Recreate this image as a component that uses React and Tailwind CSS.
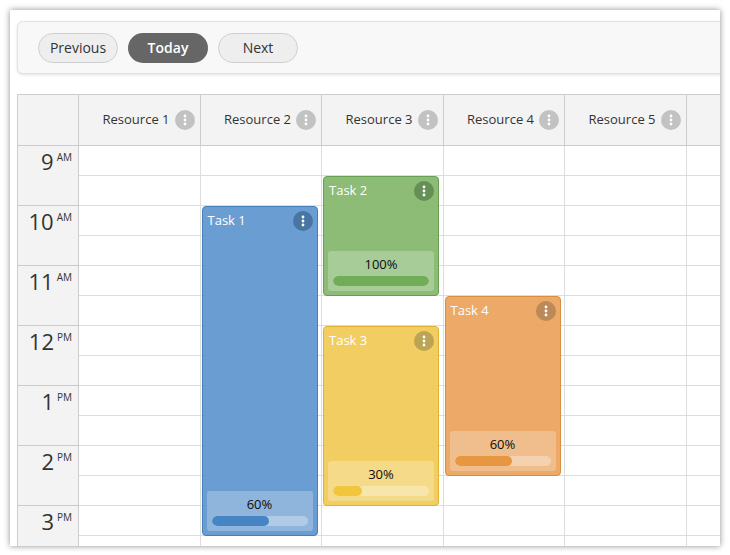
const cols = ["Resource 1","Resource 2","Resource 3","Resource 4","Resource 5"];
const hours = [["9","AM"],["10","AM"],["11","AM"],["12","PM"],["1","PM"],["2","PM"],["3","PM"]];
const events = [
  {col:1,top:60,h:330,name:"Task 1",pct:60,bg:"bg-[#6399d0]",bd:"border-[#3f7ab8]",bar:"bg-[#3d7fc1]",dot:"bg-[#3f6e9c]"},
  {col:2,top:30,h:120,name:"Task 2",pct:100,bg:"bg-[#86b96e]",bd:"border-[#5f9a4a]",bar:"bg-[#6aa84f]",dot:"bg-[#5e8a4c]"},
  {col:2,top:180,h:180,name:"Task 3",pct:30,bg:"bg-[#f2cc5a]",bd:"border-[#e0ad2a]",bar:"bg-[#f1c232]",dot:"bg-[#b8a04a]"},
  {col:3,top:150,h:180,name:"Task 4",pct:60,bg:"bg-[#eba55f]",bd:"border-[#d6873c]",bar:"bg-[#e69138]",dot:"bg-[#b88450]"},
];
function Dots({cls}){return <span className={`w-5 h-5 rounded-full ${cls} flex items-center justify-center`}><svg width="4" height="12" viewBox="0 0 4 12"><circle cx="2" cy="2" r="1.4" fill="white"/><circle cx="2" cy="6" r="1.4" fill="white"/><circle cx="2" cy="10" r="1.4" fill="white"/></svg></span>}
export default function App(){
  return (
    <div className="w-[730px] h-[555px] bg-white relative overflow-hidden" style={{fontFamily:"'Open Sans','Noto Sans',sans-serif"}}>
      <div className="absolute left-[10px] top-[10px] w-[710px] h-[536px] bg-white shadow-[0_0_6px_rgba(0,0,0,0.45)] overflow-hidden pl-[7px] pt-[11px]">
        <div className="w-[720px] h-[53px] rounded-md border border-[#e3e3e3] bg-[#f8f8f8] shadow-[0_1px_3px_rgba(0,0,0,0.12)] flex items-center gap-[10px] pl-5">
          <button className="w-20 h-[30px] rounded-full border border-[#cfcfcf] bg-[#eeeeee] text-[14px] text-[#333]">Previous</button>
          <button className="w-20 h-[30px] rounded-full bg-[#666] text-[14px] font-semibold text-white">Today</button>
          <button className="w-20 h-[30px] rounded-full border border-[#cfcfcf] bg-[#eeeeee] text-[14px] text-[#333]">Next</button>
        </div>
        <div className="mt-[20px] w-[760px] border-t border-l border-[#cccccc] flex text-[#333]">
          <div className="w-[61px] shrink-0">
            <div className="h-[51px] bg-[#f3f3f3] border-b border-r border-[#cccccc]"></div>
            {hours.map(([h,s],i)=>(
              <div key={i} className="h-[60px] bg-[#f3f3f3] border-b border-r border-[#cccccc] flex justify-end pr-[6px] pt-[2px] box-border">
                <span className="text-[22px] leading-[26px]">{h}</span><span className="text-[10px] ml-[3px] mt-[2px]">{s}</span>
              </div>
            ))}
          </div>
          {cols.concat([""]).map((c,ci)=>(
            <div key={ci} className="w-[121.5px] shrink-0 relative">
              <div className="h-[51px] bg-[#f3f3f3] border-b border-r border-[#cccccc] flex items-center justify-end pr-[5px] gap-[5px] text-[13px]">
                {c && <><span>{c}</span><Dots cls="bg-[#c2c2c2]"/></>}
              </div>
              {Array.from({length:14}).map((_,i)=>(<div key={i} className="h-[30px] border-b border-r border-[#dddddd] box-border"></div>))}
              {events.filter(e=>e.col===ci).map((e,i)=>(
                <div key={i} className={`absolute left-[1px] w-[116px] rounded-[4px] border ${e.bg} ${e.bd} opacity-95 flex flex-col p-[4px]`} style={{top:51+e.top,height:e.h}}>
                  <div className="flex items-center justify-between">
                    <span className="text-white text-[13px] pl-[1px]">{e.name}</span><Dots cls={e.dot}/>
                  </div>
                  <div className="flex-1"></div>
                  <div className="bg-white/25 rounded-[3px] px-[5px] pt-[4px] pb-[5px] flex flex-col items-center">
                    <span className="text-[13px] text-black leading-[18px]">{e.pct}%</span>
                    <div className="w-full h-[10px] rounded-full bg-white/30 mt-[3px] overflow-hidden"><div className={`h-full rounded-full ${e.bar}`} style={{width:e.pct+"%"}}></div></div>
                  </div>
                </div>
              ))}
            </div>
          ))}
        </div>
      </div>
    </div>
  );
}
